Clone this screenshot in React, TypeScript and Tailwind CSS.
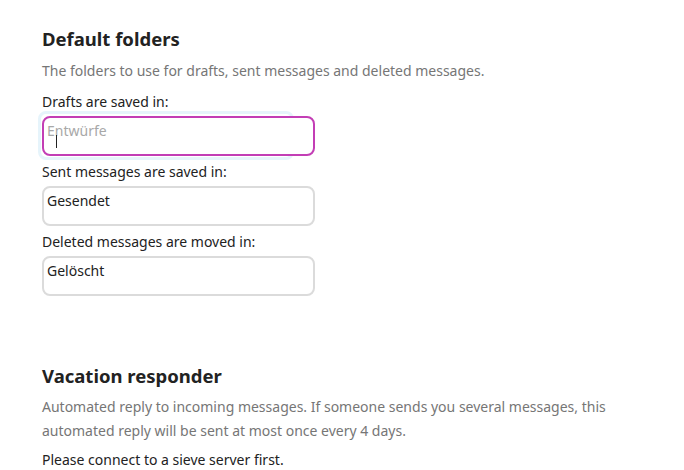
const folders = [
  { label: "Drafts are saved in:", value: "", placeholder: "Entwürfe", focused: true },
  { label: "Sent messages are saved in:", value: "Gesendet", placeholder: "", focused: false },
  { label: "Deleted messages are moved in:", value: "Gelöscht", placeholder: "", focused: false },
];

export default function App() {
  return (
    <div className="min-h-[470px] bg-white px-[42px] pt-[26px] font-['Noto_Sans',sans-serif] text-[#222]">
      {/* Default folders */}
      <section>
        <h2 className="text-[18.5px] font-bold leading-[26px]">Default folders</h2>
        <p className="mt-[7px] text-[14px] leading-[24px] text-[#767676]">
          The folders to use for drafts, sent messages and deleted messages.
        </p>
        <div className="mt-[9px] flex flex-col">
          {folders.map((f) => (
            <div key={f.label} className="mb-[6px]">
              <label className="block text-[14px] leading-[20px]">{f.label}</label>
              <div className="relative mt-[4px] w-[273px]">
                {f.focused && (
                  <span className="absolute -left-[4px] -top-[5px] h-[49px] w-[256px] rounded-[8px] border-[3px] border-[#e6f4fb]" />
                )}
                <div
                  className={
                    "relative h-[40px] rounded-[8px] border-2 bg-white px-[3px] pt-[3px] text-[14px] leading-[20px] " +
                    (f.focused ? "border-[#c33eb5]" : "border-[#dbdbdb]")
                  }
                >
                  {f.value ? (
                    <span>{f.value}</span>
                  ) : (
                    <span className="relative text-[#a8a8a8]">
                      {f.placeholder}
                      <span className="absolute left-[9px] top-[14px] h-[13px] w-px bg-[#222]" />
                    </span>
                  )}
                </div>
              </div>
            </div>
          ))}
        </div>
      </section>

      {/* Vacation responder */}
      <section className="mt-[61px]">
        <h2 className="text-[18.5px] font-bold leading-[26px]">Vacation responder</h2>
        <p className="mt-[6px] text-[14px] leading-[24px] text-[#767676]">
          Automated reply to incoming messages. If someone sends you several messages, this automated reply will be
          sent at most once every 4 days.
        </p>
        <p className="mt-[7px] text-[14px] leading-[20px]">Please connect to a sieve server first.</p>
      </section>
    </div>
  );
}
